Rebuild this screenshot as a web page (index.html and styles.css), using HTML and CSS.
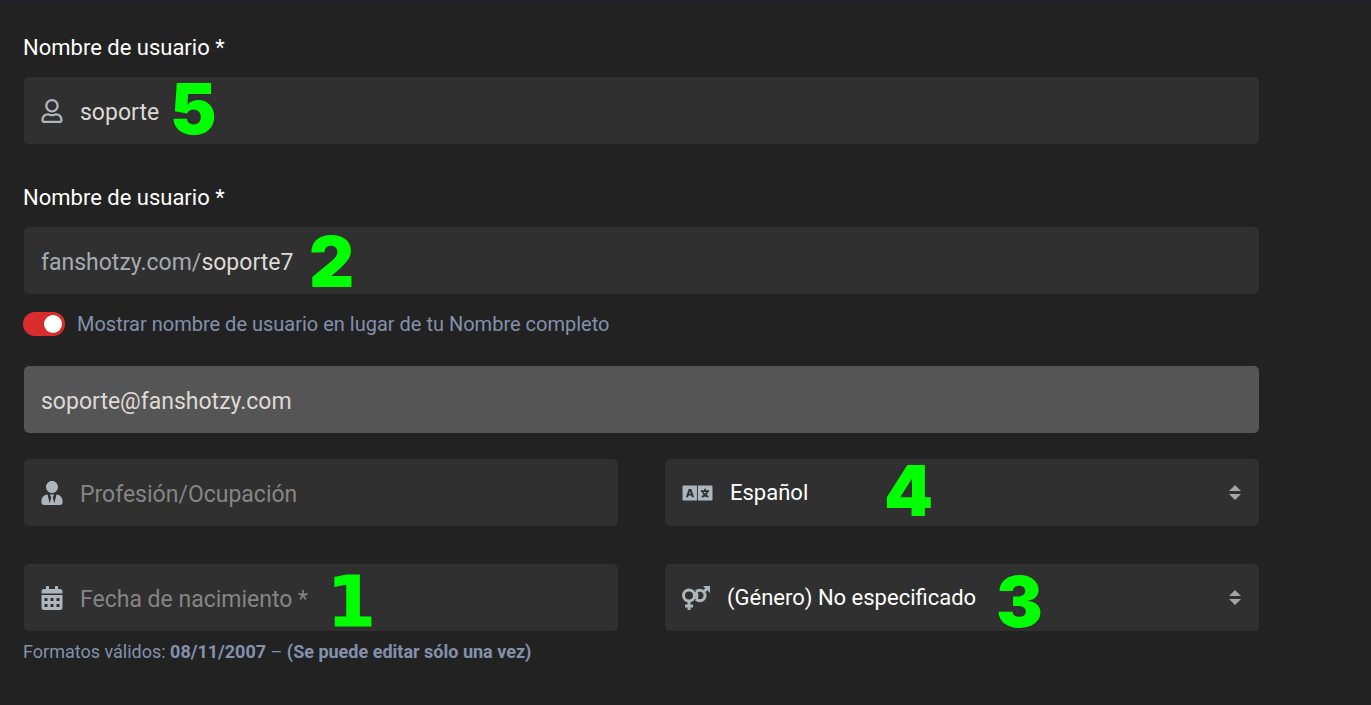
FILE: index.html
```
<!DOCTYPE html>
<html lang="es">
<head>
    <meta charset="UTF-8">
    <title>Editar perfil</title>
    <link rel="stylesheet" href="styles.css">
</head>
<body>
    <form class="profile">
        <label class="title" for="name">Nombre de usuario *</label>
        <div class="field">
            <svg class="icon" width="22" height="24" viewBox="0 0 448 512"><path d="M313.600 304c-28.700 0-42.500 16-89.600 16-47.100 0-60.800-16-89.600-16C60.200 304 0 364.200 0 438.400V464c0 26.500 21.500 48 48 48h352c26.500 0 48-21.500 48-48v-25.600c0-74.200-60.200-134.400-134.400-134.400zM400 464H48v-25.600c0-47.600 38.800-86.400 86.400-86.400 14.600 0 38.300 16 89.600 16 51.700 0 74.900-16 89.600-16 47.600 0 86.400 38.800 86.400 86.400V464zM224 288c79.500 0 144-64.500 144-144S303.500 0 224 0 80 64.500 80 144s64.500 144 144 144zm0-240c52.900 0 96 43.100 96 96s-43.100 96-96 96-96-43.100-96-96 43.100-96 96-96z"/></svg>
            <input id="name" type="text" value="soporte">
            <span class="mark mark5">5</span>
        </div>

        <label class="title" for="username">Nombre de usuario *</label>
        <div class="field">
            <span class="prefix">fanshotzy.com/</span>
            <input id="username" type="text" value="soporte7">
            <span class="mark mark2">2</span>
        </div>

        <div class="switch">
            <input id="show" type="checkbox" checked>
            <label for="show">Mostrar nombre de usuario en lugar de tu Nombre completo</label>
        </div>

        <div class="field disabled">
            <input type="email" value="soporte@fanshotzy.com" aria-label="Correo" disabled>
        </div>

        <div class="row">
            <div class="field">
                <svg class="icon" width="22" height="24" viewBox="0 0 448 512"><path d="M224 256c70.700 0 128-57.300 128-128S294.700 0 224 0 96 57.300 96 128s57.300 128 128 128zm95.800 32.600L272 480l-32-136 32-56h-96l32 56-32 136-47.800-191.400C56.900 292 0 350.300 0 422.400V464c0 26.500 21.500 48 48 48h352c26.500 0 48-21.500 48-48v-41.600c0-72.100-56.900-130.400-128.200-133.800z"/></svg>
                <input type="text" placeholder="Profesión/Ocupación" aria-label="Profesión/Ocupación">
            </div>
            <div class="field">
                <svg class="icon" width="31" height="24" viewBox="0 0 640 512">
                    <path fill-rule="evenodd" d="M24 96h284v320H24c-13 0-24-11-24-24V120c0-13 11-24 24-24zM132 168L72 344h46l11-36h62l11 36h46L188 168zM160 212l19 60h-38z"/>
                    <path d="M328 96h288c13 0 24 11 24 24v272c0 13-11 24-24 24H328z"/>
                    <path class="cut" d="M480 164v44M394 214h172M536 214c-12 58-50 98-124 126M430 240c28 52 72 82 122 100"/>
                </svg>
                <select aria-label="Idioma"><option>Español</option></select>
                <svg class="arrows" width="12" height="15" viewBox="0 0 12 15"><path d="M0 6L6 0L12 6zM0 9L6 15L12 9z"/></svg>
                <span class="mark mark4">4</span>
            </div>
        </div>

        <div class="row">
            <div class="field">
                <svg class="icon" width="22" height="24" viewBox="0 0 448 512"><path fill-rule="evenodd" d="M0 160v-48c0-26 22-48 48-48h48V12c0-7 5-12 12-12h40c7 0 12 5 12 12v52h128V12c0-7 5-12 12-12h40c7 0 12 5 12 12v52h48c26 0 48 22 48 48v48zM0 192h448v272c0 26-22 48-48 48H48c-26 0-48-22-48-48zM64 256h64v64H64zM192 256h64v64h-64zM320 256h64v64h-64zM64 384h64v64H64zM192 384h64v64h-64zM320 384h64v64h-64z"/></svg>
                <input type="text" id="birthdate" placeholder="Fecha de nacimiento *" aria-label="Fecha de nacimiento">
                <span class="mark mark1">1</span>
            </div>
            <div class="field">
                <svg class="icon" width="28" height="24" viewBox="0 0 28 24">
                    <g class="line">
                        <circle cx="7" cy="9.500" r="5.500"/>
                        <path d="M7 15V24M3 20h8M14 5.800A5.300 5.300 0 1 1 14 13.200M14 5.800Q16 9.500 14 13.200M22 5.500L26 1.500"/>
                    </g>
                    <path d="M21 0h7v7z"/>
                </svg>
                <select aria-label="Género"><option>(Género) No especificado</option></select>
                <svg class="arrows" width="12" height="15" viewBox="0 0 12 15"><path d="M0 6L6 0L12 6zM0 9L6 15L12 9z"/></svg>
                <span class="mark mark3">3</span>
            </div>
        </div>
        <p class="help">Formatos válidos: <strong>08/11/2007</strong> – <strong>(Se puede editar sólo una vez)</strong></p>
    </form>
</body>
</html>
```
FILE: styles.css
```
* {
    margin: 0;
    padding: 0;
    box-sizing: border-box;
}
body {
    background: #222 linear-gradient(#222227, #222222) no-repeat;
    background-size: 100% 16px;
    font-family: Roboto, "Liberation Sans", sans-serif;
    font-size: 22px;
    color: #fff;
}
.profile {
    padding: 33px 112px 32px 23px;
}
.title {
    display: block;
    line-height: 30px;
    margin-bottom: 14px;
}
.field {
    position: relative;
    display: flex;
    align-items: center;
    gap: 17px;
    height: 67px;
    margin-left: 1px;
    padding: 0 18px 0 17px;
    border-radius: 5px;
    background: #303030;
}
.field + .title {
    margin-top: 39px;
}
.field input,
.field select {
    flex: 1;
    min-width: 0;
    height: 100%;
    border: 0;
    outline: 0;
    background: transparent;
    font-family: inherit;
    font-size: 23px;
    color: #dedad6;
}
.field input,
.prefix {
    padding-top: 4px;
}
.field select {
    appearance: none;
    font-size: 22px;
    color: #fff;
}
.field input::placeholder {
    color: #858585;
    opacity: 1;
}
.disabled {
    background: #555;
}
.icon {
    flex: none;
    fill: #adb5bd;
}
.cut {
    fill: none;
    stroke: #303030;
    stroke-width: 38;
}
.line {
    fill: none;
    stroke: #adb5bd;
    stroke-width: 3;
}
.arrows {
    flex: none;
    fill: #a5a5a5;
}
.prefix {
    margin-right: -17px;
    font-size: 23px;
    color: #a4abb3;
}
.switch {
    display: flex;
    align-items: center;
    gap: 12px;
    height: 30px;
    margin: 15px 0 27px;
    font-size: 20px;
    color: #8391ad;
}
.switch input {
    appearance: none;
    width: 42px;
    height: 24px;
    padding: 3px;
    border-radius: 12px;
    background: #d92d2d;
}
.switch input::before {
    content: "";
    display: block;
    width: 18px;
    height: 18px;
    margin-left: auto;
    border-radius: 50%;
    background: #fff;
}
.row {
    display: grid;
    grid-template-columns: 1fr 1fr;
    gap: 46px;
    margin-top: 26px;
}
.row + .row {
    margin-top: 38px;
}
.help {
    margin-top: 8px;
    font-size: 18px;
    line-height: 26px;
    color: #8391ad;
}

/* numeros verdes encima de los campos */
.mark {
    position: absolute;
    top: 0;
    font-family: Inter, "Liberation Sans", sans-serif;
    font-weight: 900;
    font-size: 70px;
    line-height: 70px;
    color: #0f0;
    pointer-events: none;
}
.mark1 {
    left: 303px;
    top: 3px;
    font-family: "DejaVu Sans", sans-serif;
    -webkit-text-stroke: 1px #0f0;
}
.mark2 {
    left: 285px;
}
.mark3 {
    left: 331px;
    top: 3px;
}
.mark4 {
    left: 219px;
    top: -3px;
}
.mark5 {
    left: 146px;
    top: -3px;
}
```
